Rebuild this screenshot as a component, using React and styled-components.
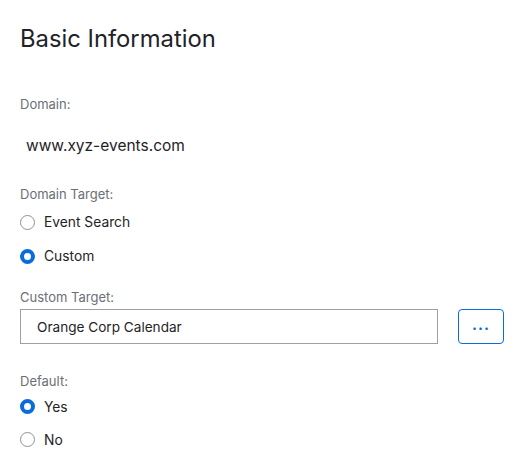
import styled, { createGlobalStyle } from 'styled-components'

const Global = createGlobalStyle`
body{
  margin:0;
  background:#fff;
  font-family:Inter, "Noto Sans", sans-serif;
  color:#1d2125;
}
`
const Page = styled.div`
padding:25px 20px 0 20px;
`
const Title = styled.h2`
margin:0 0 43px;
font-size:23.8px;
line-height:28px;
font-weight:400;
color:#1f2328;
`
const Label = styled.div`
font-size:13px;
line-height:16px;
color:#6a6f76;
margin-bottom:${p => p.gap || 0}px;
`
const Value = styled.div`
font-size:15.5px;
line-height:20px;
padding-left:6px;
margin-bottom:30px;
color:#1f2328;
`
const Group = styled.div`
display:flex;
flex-direction:column;
margin-bottom:${p => p.after || 0}px;
`
const Option = styled.label`
display:flex;
align-items:center;
gap:9px;
height:${p => p.h || 34}px;
font-size:13.8px;
color:#1f2328;
`
const Dot = styled.span`
box-sizing:border-box;
width:15px;
height:15px;
border-radius:50%;
border:${p => p.on ? '4.5px solid #0a6cdb' : '1px solid #8d9299'};
background:#fff;
flex-shrink:0;
`
const Row = styled.div`
display:flex;
gap:20px;
margin:4px 0 29px;
`
const Input = styled.div`
box-sizing:border-box;
flex-shrink:0;
width:418px;
height:35px;
border:1px solid #9ea0a6;
display:flex;
align-items:center;
padding-left:16px;
font-size:13.6px;
color:#1f2328;
`
const Button = styled.button`
box-sizing:border-box;
flex-shrink:0;
width:46px;
height:35px;
border:1px solid #0a6cdb;
border-radius:4px;
background:#fff;
color:#0a6cdb;
font-family:inherit;
font-size:15px;
font-weight:700;
letter-spacing:1px;
padding:0 0 4px;
`

const Radio = ({ on, h, children }) => (
  <Option h={h}>
    <Dot on={on} />
    {children}
  </Option>
)

const App = () => (
  <Page>
    <Global />
    <Title>Basic Information</Title>
    <Label gap={24}>Domain:</Label>
    <Value>www.xyz-events.com</Value>
    <Label gap={3}>Domain Target:</Label>
    <Group after={16}>
      <Radio>Event Search</Radio>
      <Radio on>Custom</Radio>
    </Group>
    <Label>Custom Target:</Label>
    <Row>
      <Input>Orange Corp Calendar</Input>
      <Button>...</Button>
    </Row>
    <Label gap={1}>Default:</Label>
    <Group>
      <Radio on h={33}>Yes</Radio>
      <Radio h={33}>No</Radio>
    </Group>
  </Page>
)
export default App
